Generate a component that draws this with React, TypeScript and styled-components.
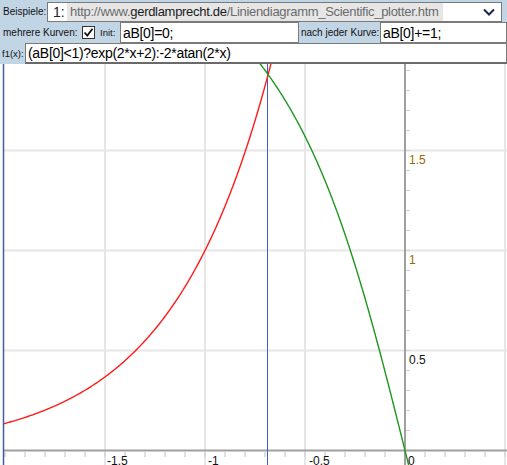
import React from 'react';
import styled, { createGlobalStyle } from 'styled-components';

const GlobalStyle = createGlobalStyle`
  html, body {
    margin: 0;
    padding: 0;
    background: #ffffff;
  }
`;

const Page = styled.div`
  width: 507px;
  height: 465px;
  overflow: hidden;
  font-family: "Liberation Sans", Arial, sans-serif;
`;

const Toolbar = styled.div`
  background: #c1d5e5;
`;

const Row = styled.div<{ $h: number }>`
  display: flex;
  align-items: center;
  height: ${(p) => p.$h}px;
`;

const Label = styled.span<{ $w: number; $size?: number; $pad?: number }>`
  flex: none;
  width: ${(p) => p.$w}px;
  box-sizing: border-box;
  padding-left: ${(p) => p.$pad ?? 3}px;
  font-size: ${(p) => p.$size ?? 10}px;
  color: #111111;
  white-space: nowrap;
`;

const Field = styled.div<{ $w?: number; $bottom?: number }>`
  ${(p) => (p.$w ? `width: ${p.$w}px; flex: none;` : 'flex: 1;')}
  height: 100%;
  box-sizing: border-box;
  border: 1px solid #7a7a7a;
  border-bottom-width: ${(p) => p.$bottom ?? 1}px;
  border-bottom-color: ${(p) => ((p.$bottom ?? 1) > 1 ? '#6a6a6a' : '#7a7a7a')};
  background: #ffffff;
  display: flex;
  align-items: center;
  padding-left: 2px;
  font-size: 14px;
  letter-spacing: -0.3px;
  color: #000000;
  white-space: nowrap;
  overflow: hidden;
`;

const Select = styled.div`
  flex: none;
  width: 455px;
  height: 20px;
  box-sizing: border-box;
  border: 1px solid #7a7a7a;
  background: #ffffff;
  display: flex;
  align-items: center;
  padding-left: 5px;
  margin-top: 1px;
`;

const Index = styled.span`
  font-size: 14px;
  color: #222222;
  width: 14px;
`;

const Url = styled.span`
  background: #e6e6e6;
  color: #6b6b6b;
  font-size: 13px;
  letter-spacing: -0.3px;
  padding: 1px 4px 2px 3px;
  white-space: nowrap;
`;

const Host = styled.span`
  color: #1a1a1a;
`;

const Chevron = styled.svg`
  margin-left: auto;
  margin-right: 6px;
`;

const Check = styled.span`
  flex: none;
  width: 13px;
  height: 13px;
  box-sizing: border-box;
  border: 1px solid #333333;
  background: #ffffff;
  margin: 0 4px 0 3px;
  display: flex;
  align-items: center;
  justify-content: center;
`;

const Plot = styled.div`
  height: 401px;
  background: #ffffff;
`;

const X0 = 405;
const Y0 = 450.5;
const S = 200;
const px = (x: number) => X0 + S * x;
const py = (y: number) => Y0 - S * y;

const curve = (f: (x: number) => number, a: number, b: number) => {
  const pts: string[] = [];
  for (let x = a; x <= b; x += 0.004) {
    pts.push(`${px(x).toFixed(2)},${py(f(x)).toFixed(2)}`);
  }
  return 'M' + pts.join(' L');
};

const redPath = curve((x) => Math.exp(2 * x + 2), -2.03, -0.64);
const greenPath = curve((x) => -2 * Math.atan(2 * x), -0.76, 0.1);

const vGrid = [105, 205, 305, 505];
const hGrid = [150.5, 250.5, 350.5];
const xTicks = Array.from({ length: 26 }, (_, i) => 5 + i * 20);
const yTicks = Array.from({ length: 21 }, (_, i) => 70.5 + i * 20);

const yLabels = [
  { t: '1.5', y: 163.5, c: '#9a6a00' },
  { t: '1', y: 263.5, c: '#9a6a00' },
  { t: '0.5', y: 363.5, c: '#111111' },
];
const xLabels = [
  { t: '-1.5', x: 107 },
  { t: '-1', x: 208 },
  { t: '-0.5', x: 309 },
  { t: '0', x: 408 },
];

const Chart = () => (
  <svg width={507} height={401} viewBox="0 64 507 401" style={{ display: 'block' }}>
    <defs>
      <clipPath id="area">
        <rect x={4} y={64} width={503} height={401} />
      </clipPath>
    </defs>
    {vGrid.map((x) => (
      <line key={x} x1={x} y1={64} x2={x} y2={465} stroke="#e6e6e6" strokeWidth={2} />
    ))}
    {hGrid.map((y) => (
      <line key={y} x1={4} y1={y} x2={507} y2={y} stroke="#e6e6e6" strokeWidth={2} />
    ))}
    {xTicks.map((x) => (
      <line key={x} x1={x} y1={452} x2={x} y2={457} stroke="#d4d4d4" strokeWidth={1.5} />
    ))}
    {yTicks.map((y) => (
      <line key={y} x1={406} y1={y} x2={410} y2={y} stroke="#d4d4d4" strokeWidth={1.2} />
    ))}
    <line x1={4} y1={Y0} x2={507} y2={Y0} stroke="#a0a0a0" strokeWidth={2} />
    <line x1={X0} y1={64} x2={X0} y2={465} stroke="#a0a0a0" strokeWidth={2} />
    <line x1={3.5} y1={64} x2={3.5} y2={465} stroke="#3f5f98" strokeWidth={1.5} />
    <line x1={267.5} y1={64} x2={267.5} y2={465} stroke="#3a5fcd" strokeWidth={1} />
    <g clipPath="url(#area)" fill="none" strokeWidth={1.4}>
      <path d={redPath} stroke="#ff1a1a" />
      <path d={greenPath} stroke="#1f961f" />
    </g>
    <g fontFamily='"Liberation Sans", Arial, sans-serif' fontSize={12}>
      {yLabels.map((l) => (
        <text key={l.t} x={409} y={l.y} fill={l.c}>
          {l.t}
        </text>
      ))}
      {xLabels.map((l) => (
        <text key={l.t} x={l.x} y={464.5} fill="#111111">
          {l.t}
        </text>
      ))}
    </g>
  </svg>
);

export default function App() {
  return (
    <Page>
      <GlobalStyle />
      <Toolbar>
        <Row $h={22}>
          <Label $w={47}>Beispiele:</Label>
          <Select>
            <Index>1:</Index>
            <Url>
              http://www.<Host>gerdlamprecht.de</Host>/Liniendiagramm_Scientific_plotter.htm
            </Url>
            <Chevron width={12} height={8} viewBox="0 0 12 8">
              <path d="M1 1.5 L6 6.5 L11 1.5" fill="none" stroke="#1c2550" strokeWidth={2} />
            </Chevron>
          </Select>
        </Row>
        <Row $h={21}>
          <Label $w={79}>mehrere Kurven:</Label>
          <Check>
            <svg width={11} height={11} viewBox="0 0 11 11">
              <path d="M1.5 5.5 L4.3 8.5 L9.5 1.8" fill="none" stroke="#111" strokeWidth={1.8} />
            </svg>
          </Check>
          <Label $w={21} $size={9.5} $pad={1}>Init:</Label>
          <Field $w={179}>aB[0]=0;</Field>
          <Label $w={81} $pad={2}>nach jeder Kurve:</Label>
          <Field>aB[0]+=1;</Field>
        </Row>
        <Row $h={21}>
          <Label $w={25} $size={9.5} $pad={2}>f1(x):</Label>
          <Field $bottom={2}>(aB[0]&lt;1)?exp(2*x+2):-2*atan(2*x)</Field>
        </Row>
      </Toolbar>
      <Plot>
        <Chart />
      </Plot>
    </Page>
  );
}
